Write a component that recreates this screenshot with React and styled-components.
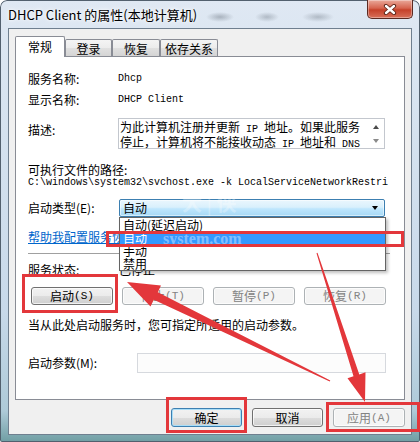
import React from 'react';
import styled, { createGlobalStyle } from 'styled-components';

const UI = `"Noto Sans CJK SC", "Noto Sans", sans-serif`;
const MONO = `"Liberation Mono", "Noto Sans CJK SC", monospace`;
const RED = '#e3373b';

const GlobalStyle = createGlobalStyle`
  html, body {
    margin: 0;
    padding: 0;
    background: #ffffff;
  }
  body {
    width: 420px;
    height: 442px;
    overflow: hidden;
    font-family: ${UI};
    color: #000;
  }
`;

const Window = styled.div`
  position: relative;
  box-sizing: border-box;
  width: 420px;
  height: 442px;
  display: flex;
  flex-direction: column;
  border-radius: 7px 7px 2px 2px;
  overflow: hidden;
  box-shadow: inset 0 0 0 1px #52606e;
  background:
    radial-gradient(ellipse 14px 5px at 220px 17px, rgba(70, 80, 92, 0.35), transparent),
    radial-gradient(ellipse 12px 5px at 267px 17px, rgba(70, 80, 92, 0.3), transparent),
    radial-gradient(ellipse 16px 5px at 318px 17px, rgba(70, 80, 92, 0.3), transparent),
    linear-gradient(180deg, #dfe8f3 0%, #d5e2ef 30%, #c8d9ea 70%, #aecad8 93%, #6f9ea3 100%);
`;

const TitleBar = styled.div`
  height: 28px;
  flex: none;
  display: flex;
  align-items: flex-start;
  justify-content: space-between;
`;

const Title = styled.div`
  padding: 6px 0 0 8px;
  font: 13px/17px ${UI};
  color: #000;
  text-shadow: 0 0 6px #fff, 0 0 3px #fff;
  white-space: nowrap;
`;

const CloseButton = styled.div`
  box-sizing: border-box;
  width: 46px;
  height: 19px;
  margin-right: 7px;
  display: flex;
  align-items: center;
  justify-content: center;
  border: 1px solid #5b2a22;
  border-top: none;
  border-radius: 0 0 5px 5px;
  background: linear-gradient(180deg, #eaa99a 0%, #d6644f 45%, #c5412a 55%, #d8705a 100%);
  box-shadow: inset 0 0 0 1px rgba(255, 255, 255, 0.35);
`;

const Body = styled.div`
  flex: 1;
  margin: 0 8px 7px;
  box-sizing: border-box;
  border: 1px solid #6f7f8f;
  background: #f0f0f0;
  padding: 7px 6px 0;
  display: flex;
  flex-direction: column;
`;

const TabStrip = styled.div`
  display: flex;
  align-items: flex-end;
  height: 20px;
  flex: none;
`;

const Tab = styled.div`
  position: relative;
  box-sizing: border-box;
  width: ${p => p.$w}px;
  height: ${p => (p.$active ? 21 : 17)}px;
  margin-bottom: ${p => (p.$active ? -1 : 0)}px;
  z-index: ${p => (p.$active ? 2 : 0)};
  border: 1px solid #898c95;
  border-bottom: none;
  border-radius: 2px 2px 0 0;
  background: ${p =>
    p.$active
      ? '#ffffff'
      : 'linear-gradient(180deg, #f4f4f4 0%, #ececec 50%, #e0e0e0 51%, #d4d4d4 100%)'};
  display: flex;
  align-items: center;
  justify-content: center;
  padding-top: ${p => (p.$active ? 0 : 1)}px;
  font: 12px/14px ${UI};
`;

const Panel = styled.div`
  position: relative;
  box-sizing: border-box;
  height: 344px;
  flex: none;
  border: 1px solid #898c95;
  background: #ffffff;
  padding: 11px 18px 0 12px;
  display: flex;
  flex-direction: column;
`;

const Field = styled.div`
  display: flex;
  align-items: ${p => (p.$top ? 'flex-start' : 'center')};
  height: ${p => p.$h}px;
  margin-top: ${p => p.$mt || 0}px;
  flex: none;
`;

const Label = styled.div`
  width: ${p => p.$w || 90}px;
  flex: none;
  margin-top: ${p => p.$mt || 0}px;
  font: 12px/14px ${UI};
  white-space: nowrap;
`;

const TextLine = styled.div`
  margin-top: ${p => p.$mt || 0}px;
  font: 12px/14px ${UI};
  white-space: nowrap;
  flex: none;
`;

const Value = styled.div`
  font: 10px/12px ${MONO};
  white-space: nowrap;
`;

const StatusValue = styled.div`
  font: 12px/14px ${UI};
  white-space: nowrap;
`;

const Latin = styled.span`
  font: 10px ${MONO};
`;

const DescBox = styled.div`
  box-sizing: border-box;
  width: 267px;
  height: 31px;
  border: 1px solid #c3c7ce;
  background: #ffffff;
  display: flex;
`;

const DescText = styled.div`
  flex: 1;
  padding: 1px 0 0 1px;
  font: 12px/13px ${UI};
  white-space: nowrap;
`;

const DescScroll = styled.div`
  width: 17px;
  flex: none;
  display: flex;
  flex-direction: column;
  align-items: center;
  justify-content: space-between;
  padding: 6px 0 5px;
  box-sizing: border-box;
`;

const ScrollArrow = styled.div`
  width: 0;
  height: 0;
  border-left: 3.5px solid transparent;
  border-right: 3.5px solid transparent;
  ${p => (p.$down ? 'border-top' : 'border-bottom')}: 4px solid ${p => (p.$down ? '#8a8a8a' : '#4a4a4a')};
`;

const PathLine = styled.div`
  font: 10px/12px ${MONO};
  white-space: nowrap;
  flex: none;
`;

const ComboWrap = styled.div`
  position: relative;
  width: 266px;
  height: 18px;
`;

const Combo = styled.div`
  box-sizing: border-box;
  height: 18px;
  border: 1px solid #3c7fb1;
  border-radius: 2px;
  background: linear-gradient(180deg, #eaf6fd 0%, #d9f0fc 45%, #bee6fd 55%, #a7d9f5 100%);
  box-shadow: inset 0 0 0 1px rgba(255, 255, 255, 0.5);
  display: flex;
  align-items: center;
  justify-content: space-between;
  padding: 0 6px 0 3px;
  font: 12px/14px ${UI};
`;

const ComboArrow = styled.div`
  width: 0;
  height: 0;
  border-left: 3.5px solid transparent;
  border-right: 3.5px solid transparent;
  border-top: 4px solid #000;
`;

const DropList = styled.div`
  position: absolute;
  top: 100%;
  left: 0;
  right: -1px;
  z-index: 5;
  box-sizing: border-box;
  border: 1px solid #646464;
  background: #ffffff;
  box-shadow: 2px 2px 3px rgba(0, 0, 0, 0.25);
`;

const DropItem = styled.div`
  height: 13px;
  padding-left: 3px;
  font: 12px/13px ${UI};
  white-space: nowrap;
  background: ${p => (p.$selected ? '#3399ff' : 'transparent')};
  color: ${p => (p.$selected ? '#ffffff' : '#000000')};
`;

const HelpLink = styled.div`
  margin-top: 13px;
  font: 12px/14px ${UI};
  color: #0066cc;
  text-decoration: underline;
  white-space: nowrap;
  flex: none;
`;

const Separator = styled.div`
  margin-top: 9px;
  width: 362px;
  height: 1px;
  flex: none;
  background: #a0a0a0;
`;

const ButtonRow = styled.div`
  display: grid;
  grid-template-columns: repeat(4, 1fr);
  column-gap: 9px;
  height: 18px;
  margin-top: 10px;
  padding-left: 3px;
  flex: none;
`;

const Footer = styled.div`
  display: flex;
  justify-content: flex-end;
  gap: 10px;
  margin-top: 8px;
`;

const Button = styled.div`
  box-sizing: border-box;
  width: ${p => (p.$w ? `${p.$w}px` : 'auto')};
  height: ${p => p.$h || 18}px;
  display: flex;
  align-items: center;
  justify-content: center;
  border-radius: 3px;
  font: 12px/14px ${UI};
  white-space: nowrap;
  border: 1px solid ${p => (p.disabled ? '#adb2b5' : p.$primary ? '#3c7fb1' : '#707070')};
  color: ${p => (p.disabled ? '#838383' : '#000')};
  background: ${p =>
    p.disabled
      ? '#f4f4f4'
      : 'linear-gradient(180deg, #f2f2f2 0%, #ebebeb 50%, #dddddd 51%, #cfcfcf 100%)'};
  box-shadow: inset 0 0 0 1px ${p => (p.$primary ? '#a9def8' : 'rgba(255, 255, 255, 0.7)')};
`;

const ParamInput = styled.div`
  box-sizing: border-box;
  width: 249px;
  height: 20px;
  border: 1px solid #d6d9de;
  background: #fcfcfc;
`;

const RedBox = styled.div`
  position: absolute;
  box-sizing: border-box;
  border: 3px solid ${RED};
  z-index: 9;
  pointer-events: none;
`;

const Watermark = styled.div`
  position: absolute;
  z-index: 8;
  pointer-events: none;
  font-family: "Liberation Serif", "Noto Sans CJK SC", serif;
  font-weight: bold;
  white-space: nowrap;
  color: rgba(255, 255, 255, ${p => p.$alpha});
  font-size: ${p => p.$size}px;
  line-height: 1;
`;

const ArrowLayer = styled.svg`
  position: absolute;
  left: 0;
  top: 0;
  z-index: 10;
  pointer-events: none;
`;

const Paren = styled.span`
  font: 11px ${MONO};
`;

const tabs = [
  { name: '常规', w: 50, active: true },
  { name: '登录', w: 47 },
  { name: '恢复', w: 48 },
  { name: '依存关系', w: 58 },
];

const startOptions = ['自动(延迟启动)', '自动', '手动', '禁用'];

const serviceButtons = [
  { label: '启动', key: 'S' },
  { label: '停止', key: 'T', disabled: true },
  { label: '暂停', key: 'P', disabled: true },
  { label: '恢复', key: 'R', disabled: true },
];

const App = () => (
  <>
    <GlobalStyle />
    <Window>
      <TitleBar>
        <Title>DHCP Client 的属性(本地计算机)</Title>
        <CloseButton>
          <svg width="14" height="11" viewBox="0 0 14 11">
            <path d="M3 2 L11 9 M11 2 L3 9" stroke="#5a2216" strokeWidth="4.2" strokeLinecap="round" />
            <path d="M3 2 L11 9 M11 2 L3 9" stroke="#ffffff" strokeWidth="2.4" strokeLinecap="round" />
          </svg>
        </CloseButton>
      </TitleBar>

      <Body>
        <TabStrip>
          {tabs.map(t => (
            <Tab key={t.name} $w={t.w} $active={t.active}>{t.name}</Tab>
          ))}
        </TabStrip>

        <Panel>
          <Field $h={21}>
            <Label>服务名称:</Label>
            <Value>Dhcp</Value>
          </Field>
          <Field $h={21}>
            <Label>显示名称:</Label>
            <Value>DHCP Client</Value>
          </Field>
          <Field $h={31} $mt={8} $top>
            <Label $mt={5}>描述:</Label>
            <DescBox>
              <DescText>
                为此计算机注册并更新<Latin> IP </Latin>地址。如果此服务
                <br />
                停止，计算机将不能接收动态<Latin> IP </Latin>地址和<Latin> DNS</Latin>
              </DescText>
              <DescScroll>
                <ScrollArrow />
                <ScrollArrow $down />
              </DescScroll>
            </DescBox>
          </Field>

          <TextLine $mt={14}>可执行文件的路径:</TextLine>
          <PathLine>{'C:\\windows\\system32\\svchost.exe -k LocalServiceNetworkRestri'}</PathLine>

          <Field $h={18} $mt={10}>
            <Label $w={91}>启动类型(E):</Label>
            <ComboWrap>
              <Combo>
                <span>自动</span>
                <ComboArrow />
              </Combo>
              <DropList>
                {startOptions.map(o => (
                  <DropItem key={o} $selected={o === '自动'}>{o}</DropItem>
                ))}
              </DropList>
            </ComboWrap>
          </Field>

          <HelpLink>帮助我配置服务恢复选项。</HelpLink>
          <Separator />

          <Field $h={14} $mt={9}>
            <Label $w={91}>服务状态:</Label>
            <StatusValue>已停止</StatusValue>
          </Field>

          <ButtonRow>
            {serviceButtons.map(b => (
              <Button key={b.key} disabled={b.disabled}>
                {b.label}<Paren>({b.key})</Paren>
              </Button>
            ))}
          </ButtonRow>

          <TextLine $mt={13}>当从此处启动服务时，您可指定所适用的启动参数。</TextLine>

          <Field $h={20} $mt={21}>
            <Label $w={109}>启动参数(M):</Label>
            <ParamInput />
          </Field>
        </Panel>

        <Footer>
          <Button $w={71} $h={19} $primary>确定</Button>
          <Button $w={71} $h={19}>取消</Button>
          <Button $w={72} $h={19} disabled>应用<Paren>(A)</Paren></Button>
        </Footer>
      </Body>

      <Watermark $alpha={0.3} $size={20} style={{ left: 182, top: 194 }}>大 | 侠</Watermark>
      <Watermark $alpha={0.4} $size={16} style={{ left: 163, top: 231 }}>system.com</Watermark>

      <RedBox style={{ left: 106, top: 231, width: 298, height: 16 }} />
      <RedBox style={{ left: 22, top: 274, width: 96, height: 39 }} />
      <RedBox style={{ left: 166, top: 397, width: 81, height: 36 }} />
      <RedBox style={{ left: 326, top: 402, width: 94, height: 30 }} />

      <ArrowLayer width="420" height="442" viewBox="0 0 420 442">
        <polygon
          fill={RED}
          points="127,282 161,285.5 157.8,292.2 330.3,380.5 329.7,381.5 153.8,299.8 150.5,306.5"
        />
        <polygon
          fill={RED}
          points="365,402 365.5,372.3 359.3,374.4 317.5,252.8 316.5,253.2 353.5,376.2 347.5,378.3"
        />
      </ArrowLayer>
    </Window>
  </>
);

export default App;
